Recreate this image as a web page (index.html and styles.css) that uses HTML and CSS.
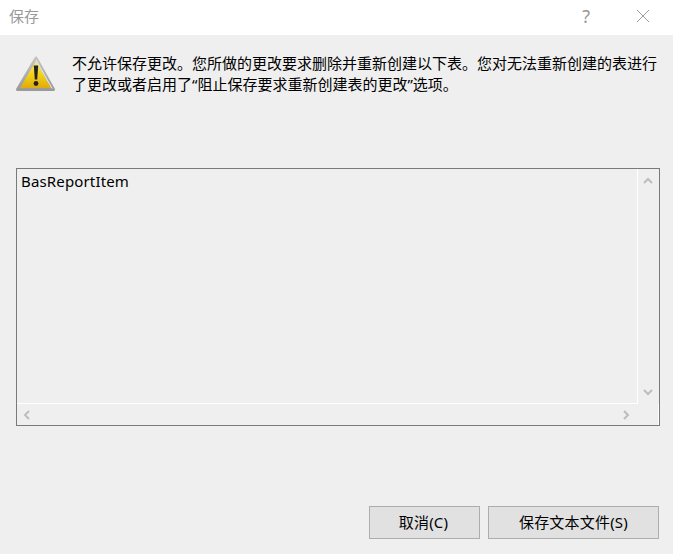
FILE: index.html
```html
<!DOCTYPE html>
<html lang="zh-CN">
  <head>
    <meta charset="UTF-8">
    <title>保存</title>
    <link rel="stylesheet" href="styles.css">
  </head>
  <body>
    <div class="dialog">
      <div class="titlebar">
        <span class="title">保存</span>
        <span class="help">?</span>
        <svg class="close" width="14" height="14" viewBox="0 0 14 14">
          <path d="M1 1L13 13M13 1L1 13" stroke="#9a9a9a" stroke-width="1" fill="none"/>
        </svg>
      </div>

      <div class="message">
        <svg class="warn-icon" width="42" height="38" viewBox="0 0 42 38">
          <defs>
            <linearGradient id="warnFill" x1="0" y1="0" x2="0" y2="1">
              <stop offset="0" stop-color="#f8ee9c"/>
              <stop offset="0.5" stop-color="#f3d519"/>
              <stop offset="1" stop-color="#dfa60a"/>
            </linearGradient>
            <linearGradient id="warnEdge" x1="0" y1="0" x2="0" y2="1">
              <stop offset="0" stop-color="#c4c4c4"/>
              <stop offset="1" stop-color="#9a9a9a"/>
            </linearGradient>
          </defs>
          <path d="M21 3L38.5 34.5H2.5Z" fill="url(#warnFill)" stroke="url(#warnEdge)" stroke-width="3" stroke-linejoin="round"/>
          <path d="M21 5L37 33.5" stroke="#ececec" stroke-width="1" fill="none"/>
          <path d="M18.8 10.5H23.2L22.2 24.5H19.8Z" fill="#222"/>
          <circle cx="21" cy="28.5" r="2.4" fill="#222"/>
        </svg>
        <p class="message-text">不允许保存更改。您所做的更改要求删除并重新创建以下表。您对无法重新创建的表进行了更改或者启用了“阻止保存要求重新创建表的更改”选项。</p>
      </div>

      <div class="listbox">
        <div class="list-content">BasReportItem</div>
        <div class="vscroll">
          <svg width="10" height="7" viewBox="0 0 10 7"><path d="M1 6L5 2L9 6" stroke="#bdbdbd" stroke-width="2" fill="none"/></svg>
          <svg width="10" height="7" viewBox="0 0 10 7"><path d="M1 1L5 5L9 1" stroke="#bdbdbd" stroke-width="2" fill="none"/></svg>
        </div>
        <div class="hscroll">
          <svg width="7" height="10" viewBox="0 0 7 10"><path d="M6 1L2 5L6 9" stroke="#bdbdbd" stroke-width="2" fill="none"/></svg>
          <svg width="7" height="10" viewBox="0 0 7 10"><path d="M1 1L5 5L1 9" stroke="#bdbdbd" stroke-width="2" fill="none"/></svg>
        </div>
        <div class="corner"></div>
      </div>

      <div class="actions">
        <button class="button cancel-button">取消(C)</button>
        <button class="button save-button">保存文本文件(S)</button>
      </div>
    </div>
  </body>
</html>
```

FILE: styles.css
```css
body {
  margin: 0;
  background: #efefef;
  font-family: "Noto Sans", "Noto Sans CJK SC", sans-serif;
  font-size: 15px;
  color: #000;
}
.dialog {
  width: 673px;
  height: 554px;
  display: flex;
  flex-direction: column;
  overflow: hidden;
}
.titlebar {
  height: 35px;
  background: white;
  display: flex;
  align-items: center;
  padding: 0 23px 0 9px;
  flex-shrink: 0;
}
.title {
  color: #999;
  flex: 1;
  margin-top: -4px;
}
.help {
  color: #999;
  font-size: 18px;
  margin: -4px 46px 0 0;
}
.close {
  margin-top: -4px;
}
.message {
  display: flex;
  padding: 18px 14px 0 15px;
  height: 115px;
  flex-shrink: 0;
}
.warn-icon {
  margin: 2px 15px 0 0;
  flex-shrink: 0;
}
.message-text {
  margin: 0;
  line-height: 21px;
  width: 586px;
}
.listbox {
  margin-left: 16px;
  width: 642px;
  height: 256px;
  border: 1px solid #7a7a7a;
  display: grid;
  grid-template-columns: 621px 21px;
  grid-template-rows: 235px 21px;
  flex-shrink: 0;
}
.list-content {
  padding: 2px 4px;
  border-right: 1px solid white;
  border-bottom: 1px solid white;
  letter-spacing: 0.15px;
}
.vscroll {
  display: flex;
  flex-direction: column;
  justify-content: space-between;
  align-items: center;
  padding: 8px 2px 8px 0;
}
.hscroll {
  display: flex;
  justify-content: space-between;
  align-items: center;
  padding: 0 8px 0 6px;
}
.corner {
  border-right: 1px solid white;
}
.actions {
  display: flex;
  justify-content: flex-end;
  gap: 8px;
  padding: 80px 14px 0 0;
}
.button {
  height: 33px;
  padding: 0 0 3px;
  border: 1px solid #adadad;
  background: #e1e1e1;
  font-family: inherit;
  font-size: 15px;
  letter-spacing: 0.2px;
  color: #000;
}
.cancel-button {
  width: 111px;
  padding-right: 2px;
}
.save-button {
  width: 171px;
}
```
